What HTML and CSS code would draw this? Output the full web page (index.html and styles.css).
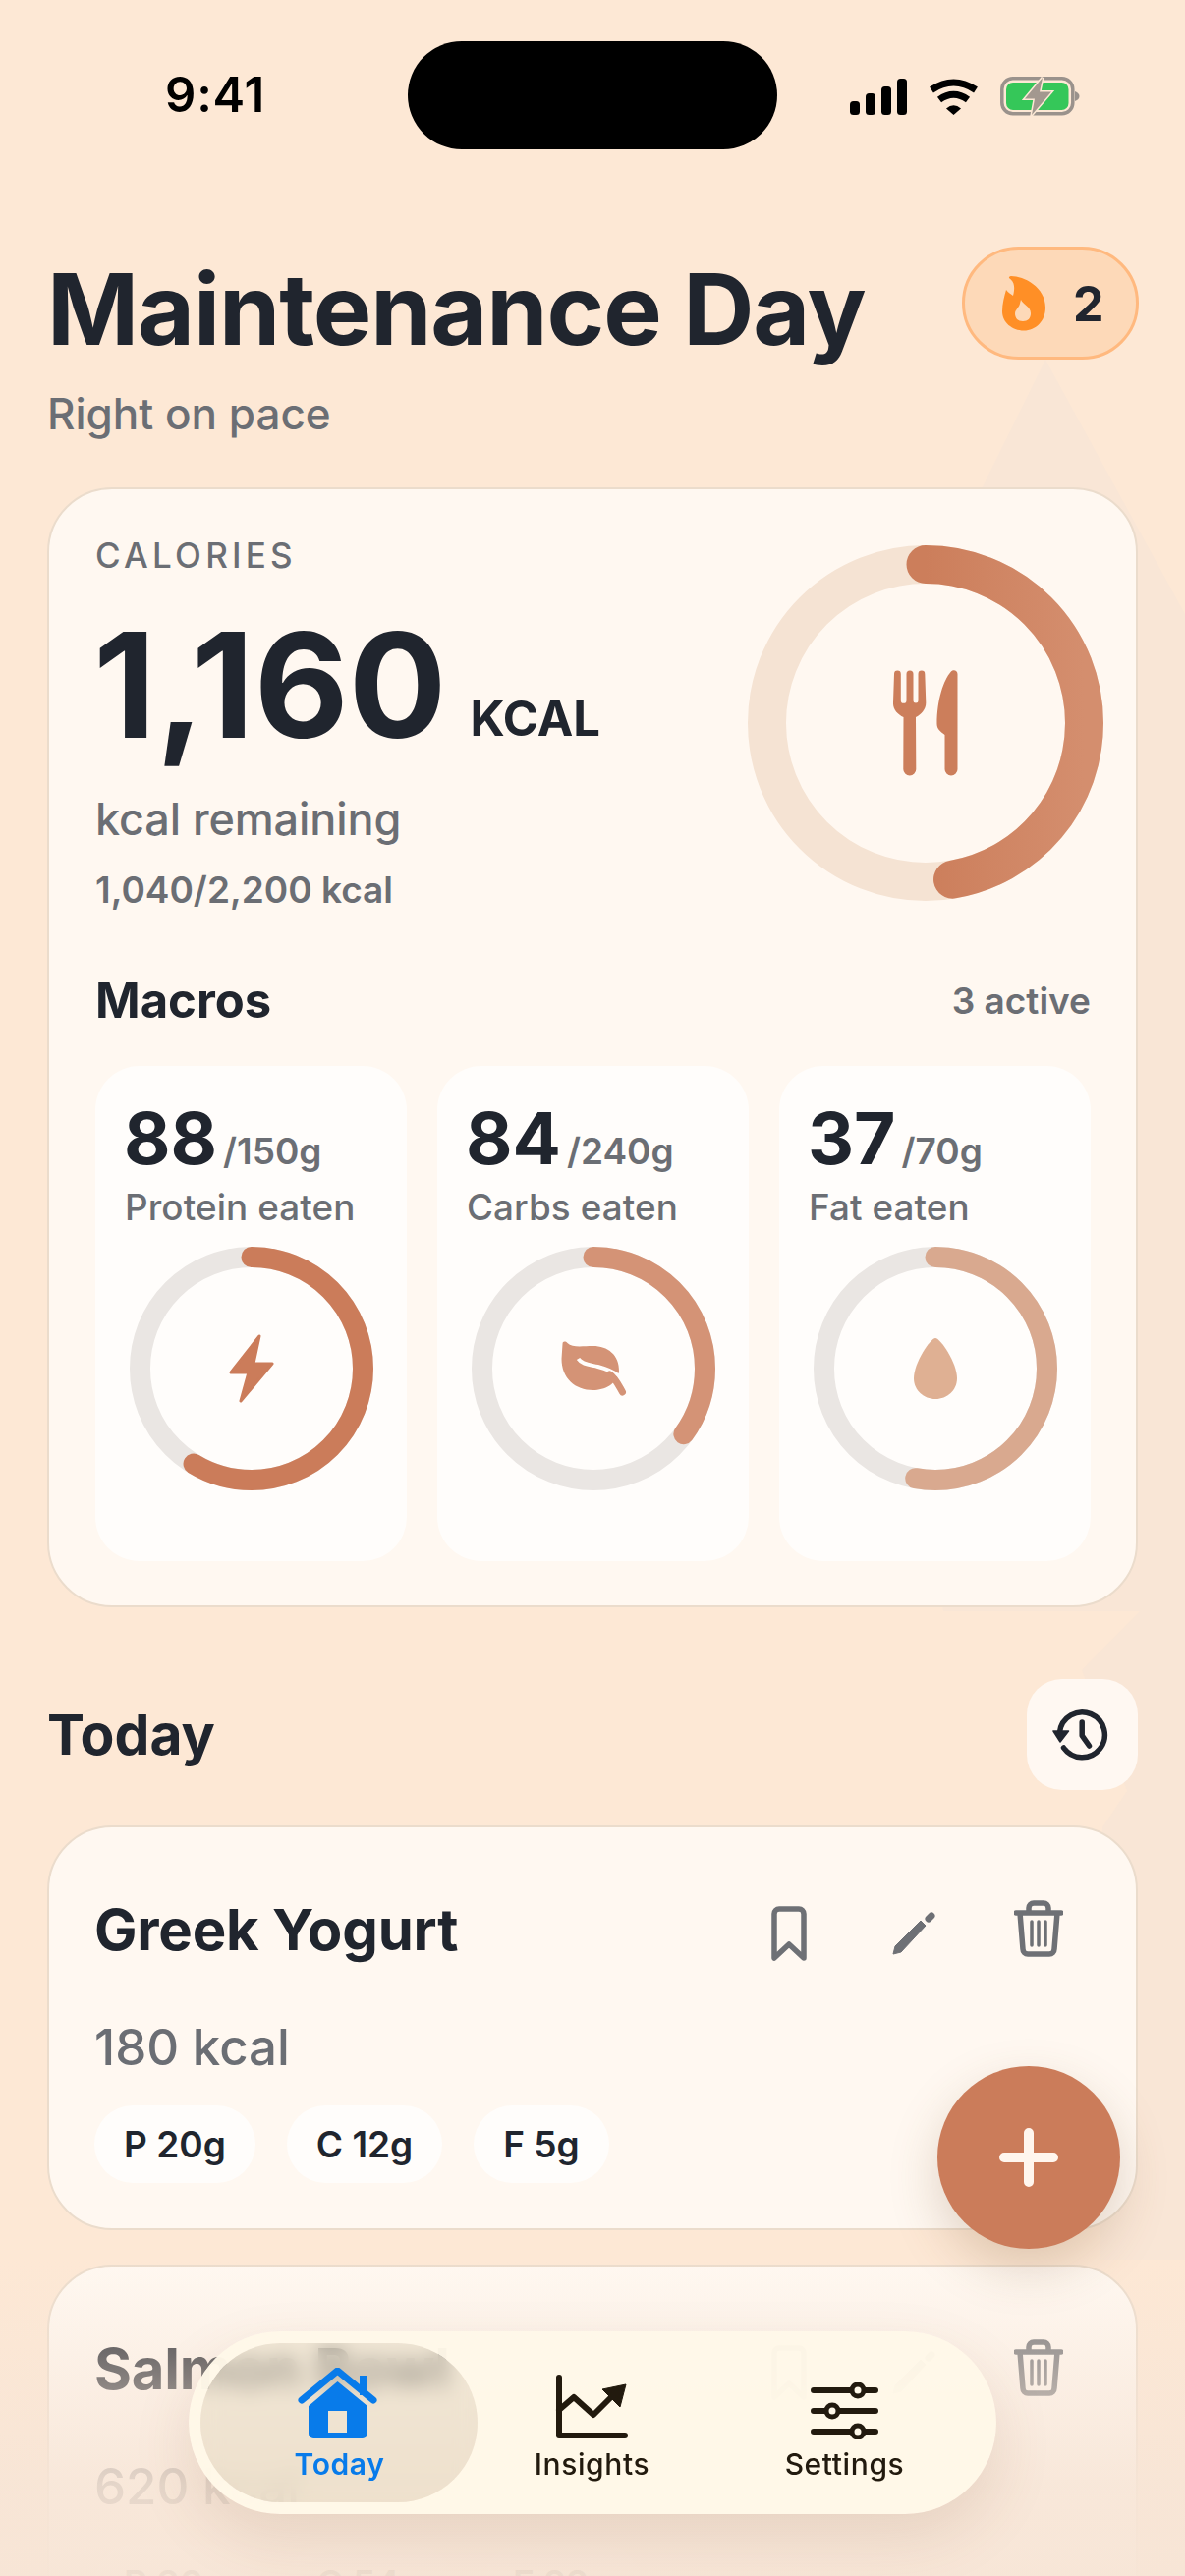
FILE: index.html
```html
<!DOCTYPE html>
<html lang="en">
<head>
<meta charset="utf-8">
<title>Maintenance Day</title>
<link rel="stylesheet" href="styles.css">
</head>
<body>
<div class="phone">
  <svg class="backdrop" viewBox="0 0 1206 2622" width="1206" height="2622" aria-hidden="true">
    <polygon class="backdrop-shape" points="1064,366 1206,625 1206,1650 1160,1640 960,1640 800,900"/>
    <polygon class="backdrop-shape" points="1160,1640 1206,1600 1206,2300 1120,2300 1122,1860 1147,1823 1101,1700"/>
  </svg>

  <header class="status">
    <div class="time">9:41</div>
    <div class="island"></div>
    <div class="status-icons">
      <svg class="i-signal" viewBox="0 0 58 37" width="58" height="37"><rect x="0" y="23" width="10" height="14" rx="3.5"/><rect x="16" y="15" width="10" height="22" rx="3.5"/><rect x="32" y="8" width="10" height="29" rx="3.5"/><rect x="48" y="0" width="10" height="37" rx="3.5"/></svg>
      <svg class="i-wifi" viewBox="0 0 51 37" width="51" height="37"><path class="wifi-arc" d="M3 11.5Q25.500-3.500 48 11.500"/><path class="wifi-arc" d="M11 21.500Q25.500 11 40 21.500"/><path d="M18 30.500Q25.500 24 33 30.500L25.500 37Z"/></svg>
      <svg class="i-battery" viewBox="0 0 82 40" width="82" height="40"><rect class="batt-shell" x="1.800" y="1.800" width="72" height="36" rx="11"/><rect class="batt-fill" x="6" y="6" width="63.500" height="28" rx="7"/><path class="batt-tip" d="M76 15c3 1 4.500 3 4.500 5s-1.500 4-4.500 5z"/><path class="batt-bolt" d="M43 1 25 22.500H35L32 39 52 15.500H40Z"/></svg>
    </div>
  </header>

  <main class="content">
    <section class="page-head">
      <div>
        <h1 class="page-title">Maintenance Day</h1>
        <p class="page-sub">Right on pace</p>
      </div>
      <div class="streak">
        <svg viewBox="0 0 44 57" width="44" height="57"><path class="flame" fill-rule="evenodd" d="M9 1C22 1 44 12 44 33 44 47 34 56.500 22 56.500 10 56.500 0 48 0 37 0 29 2 22 4 15 6 18 9 19 11 21 13 14 13 7 7 3 6.500 2 7.500 1 9 1ZM19 25C21 30 29 32 29 39 29 44 26 47 21 47 16 47 13 44 13 39 13 36 15 35 16 33 18 31 18 28 19 25Z"/></svg>
        <span class="streak-num">2</span>
      </div>
    </section>

    <section class="card summary">
      <div class="cal-row">
        <div class="cal-text">
          <div class="cal-label">CALORIES</div>
          <div class="cal-value"><span class="cal-num">1,160</span><span class="cal-unit">KCAL</span></div>
          <div class="cal-remaining">kcal remaining</div>
          <div class="cal-total">1,040/2,200 kcal</div>
        </div>
        <div class="cal-ring">
          <svg viewBox="0 0 362 362" width="362" height="362">
            <defs><linearGradient id="calGrad" x1="0" y1="0" x2="0" y2="1"><stop offset=".5" stop-color="#cc7e5b"/><stop offset="1" stop-color="#d48e6e"/></linearGradient></defs>
            <circle class="ring-track-cal" cx="181" cy="181" r="161.500"/>
            <circle class="ring-cal" cx="181" cy="181" r="161.500" pathLength="100" stroke-dasharray="47.270 100" transform="rotate(-90 181 181)"/>
          </svg>
          <svg class="ring-icon" viewBox="0 0 67 108" width="67" height="108"><path class="fill-clay" d="M1.500 4a3.400 3.400 0 0 1 6.800 0V31a2.850 2.850 0 0 0 5.700 0V4a3.500 3.500 0 0 1 7 0V31a2.500 2.500 0 0 0 5 0V4a3.400 3.400 0 0 1 6.800 0L33.800 33C34 40 29 45 23.500 48L23.800 101a6.500 6.500 0 0 1-13 0L11 48C5 45 0 40 .5 33Z"/><path class="fill-clay" d="M66 4V101a6.500 6.500 0 0 1-13 0V66C49 63 45 60 45 55 45 30 52 10 59 2 61-1 66 0 66 4Z"/></svg>
        </div>
      </div>

      <div class="macros-head">
        <h2 class="macros-title">Macros</h2>
        <span class="macros-count">3 active</span>
      </div>

      <div class="macro-grid">
        <article class="macro">
          <div class="macro-value"><span class="macro-num">88</span><span class="macro-goal">/150g</span></div>
          <div class="macro-label">Protein eaten</div>
          <div class="macro-ring">
            <svg viewBox="0 0 248 248" width="248" height="248"><circle class="ring-track" cx="124" cy="124" r="113.500"/><circle class="ring-prog prog-p" cx="124" cy="124" r="113.500" pathLength="100" stroke-dasharray="58.700 100" transform="rotate(-90 124 124)"/></svg>
            <svg class="ring-icon" viewBox="0 0 46 70" width="46" height="70"><path class="bolt" d="M31 2 2 39H20L12 68 44 30H25Z"/></svg>
          </div>
        </article>
        <article class="macro">
          <div class="macro-value"><span class="macro-num">84</span><span class="macro-goal">/240g</span></div>
          <div class="macro-label">Carbs eaten</div>
          <div class="macro-ring">
            <svg viewBox="0 0 248 248" width="248" height="248"><circle class="ring-track" cx="124" cy="124" r="113.500"/><circle class="ring-prog prog-c" cx="124" cy="124" r="113.500" pathLength="100" stroke-dasharray="35 100" transform="rotate(-90 124 124)"/></svg>
            <svg class="ring-icon" viewBox="0 0 67 56" width="67" height="56"><path class="leaf" d="M2 3C2 0 5 0 7 2 12 7 22 5 33 5 48 5 60 14 59.500 31 57 44 45 50 33 50 15 50 1 38 1 18Z"/><path class="leaf-vein" d="M18 18C22 24 30 24 38 26 46 28 52 30 60 36"/><path class="leaf-stem" d="M50 34C56 38 59 45 63 52"/></svg>
          </div>
        </article>
        <article class="macro">
          <div class="macro-value"><span class="macro-num">37</span><span class="macro-goal">/70g</span></div>
          <div class="macro-label">Fat eaten</div>
          <div class="macro-ring">
            <svg viewBox="0 0 248 248" width="248" height="248"><circle class="ring-track" cx="124" cy="124" r="113.500"/><circle class="ring-prog prog-f" cx="124" cy="124" r="113.500" pathLength="100" stroke-dasharray="52.860 100" transform="rotate(-90 124 124)"/></svg>
            <svg class="ring-icon" viewBox="0 0 44 62" width="44" height="62"><path class="drop" d="M22 0C27 0 44 25 44 41 44 53 34 62 22 62 10 62 0 53 0 41 0 25 17 0 22 0Z"/></svg>
          </div>
        </article>
      </div>
    </section>

    <section class="today-head">
      <h2 class="today-title">Today</h2>
      <button class="history" type="button" aria-label="History">
        <svg viewBox="3.500 0 60 60" width="60" height="60"><path class="hist-line" d="M10 27A23 23 0 1 1 14 43"/><path class="hist-arrow" d="M3.500 26H19L10.500 37Z"/><path class="hist-hand" d="M32.700 17V30.700L40 41"/></svg>
      </button>
    </section>

    <article class="card food">
      <div class="food-top">
        <h3 class="food-name">Greek Yogurt</h3>
        <div class="food-actions">
          <span class="act act-low"><svg viewBox="0 0 36 56" width="36" height="56"><path class="act-line" d="M3 8A5 5 0 0 1 8 3H28A5 5 0 0 1 33 8V53L18 39 3 53Z"/></svg></span>
          <span class="act act-low"><svg viewBox="0 0 44 44" width="44" height="44"><path class="act-fill" d="M1 43 3 35 29 9 34 14 9 41Z"/><path class="act-cap" d="M37 7 40 4"/></svg></span>
          <span class="act"><svg viewBox="0 0 50 58" width="50" height="58"><path class="act-line" d="M2 13H48M15 13V8A5 5 0 0 1 20 3H30A5 5 0 0 1 35 8V13M6 13 9 50A5 5 0 0 0 14 55H36A5 5 0 0 0 41 50L44 13"/><path class="act-rib" d="M18 22V46M25 22V46M32 22V46"/></svg></span>
        </div>
      </div>
      <div class="food-kcal">180 kcal</div>
      <div class="chips"><span class="chip">P 20g</span><span class="chip">C 12g</span><span class="chip">F 5g</span></div>
    </article>

    <article class="card food">
      <div class="food-top">
        <h3 class="food-name">Salmon Bowl</h3>
        <div class="food-actions">
          <span class="act act-low"><svg viewBox="0 0 36 56" width="36" height="56"><path class="act-line" d="M3 8A5 5 0 0 1 8 3H28A5 5 0 0 1 33 8V53L18 39 3 53Z"/></svg></span>
          <span class="act act-low"><svg viewBox="0 0 44 44" width="44" height="44"><path class="act-fill" d="M1 43 3 35 29 9 34 14 9 41Z"/><path class="act-cap" d="M37 7 40 4"/></svg></span>
          <span class="act"><svg viewBox="0 0 50 58" width="50" height="58"><path class="act-line" d="M2 13H48M15 13V8A5 5 0 0 1 20 3H30A5 5 0 0 1 35 8V13M6 13 9 50A5 5 0 0 0 14 55H36A5 5 0 0 0 41 50L44 13"/><path class="act-rib" d="M18 22V46M25 22V46M32 22V46"/></svg></span>
        </div>
      </div>
      <div class="food-kcal">620 kcal</div>
      <div class="chips"><span class="chip">P 30g</span><span class="chip">C 54g</span><span class="chip">F 22g</span></div>
    </article>
  </main>

  <div class="fade"></div>

  <button class="fab" type="button" aria-label="Add">
    <svg viewBox="0 0 60 60" width="60" height="60"><path class="fab-plus" d="M30 5V55M5 30H55"/></svg>
  </button>

  <nav class="tabbar">
    <span class="tab-pill"></span>
    <a class="tab tab-active">
      <svg viewBox="0 0 82 73" width="82" height="73"><path class="home-body" fill-rule="evenodd" d="M40.500 14 71 39V67A5 5 0 0 1 66 72H16A5 5 0 0 1 11 67V39ZM31 44V66H50V44Z"/><path class="home-roof" d="M4 33 40.500 3 77 33"/><rect class="home-chim" x="63" y="8" width="8" height="20"/></svg>
      <span class="tab-label">Today</span>
    </a>
    <a class="tab">
      <svg viewBox="0 0 75 66" width="75" height="66"><path class="chart-axis" d="M4 3V62H71"/><path class="chart-line" d="M4 36 19 23 39 41 58 22"/><path class="chart-head" d="M72 10 48 15 66 33Z"/></svg>
      <span class="tab-label">Insights</span>
    </a>
    <a class="tab">
      <svg viewBox="0 0 69 58" width="69" height="58"><path class="slider-line" d="M3 8H66M3 29H66M3 50H66"/><circle class="slider-knob" cx="48" cy="8" r="6"/><circle class="slider-knob" cx="22" cy="29" r="6"/><circle class="slider-knob" cx="48" cy="50" r="6"/></svg>
      <span class="tab-label">Settings</span>
    </a>
  </nav>
</div>
</body>
</html>
```

FILE: styles.css
```css
* { box-sizing: border-box; }
html, body { margin: 0; padding: 0; }
body { font-family: Inter, "Noto Sans", sans-serif; color: #20252e; background: #fde8d5; }
h1, h2, h3, p { margin: 0; }

.phone { position: relative; width: 1206px; height: 2622px; overflow: hidden; background: #fde8d5; }
.backdrop { position: absolute; left: 0; top: 0; }
.backdrop-shape { fill: #f9e6d6; }

/* status bar */
.status { position: relative; display: grid; grid-template-columns: 415px 376px 1fr; height: 152px; }
.time { margin: 68px 0 0 168px; font-size: 49px; line-height: 58px; font-weight: 600; color: #000; letter-spacing: .8px; }
.island { margin-top: 42px; height: 110px; border-radius: 55px; background: #000; }
.status-icons { display: flex; align-items: center; gap: 22px; height: 40px; margin-top: 78px; padding-left: 74px; }
.i-signal, .i-wifi { fill: #000; }
.wifi-arc { fill: none; stroke: #000; stroke-width: 7; }
.batt-shell { fill: none; stroke: #9a928c; stroke-width: 3.5; }
.batt-fill { fill: #35c759; }
.batt-tip { fill: #9a928c; }
.batt-bolt { fill: #a3988f; stroke: #fde8d5; stroke-width: 3; paint-order: stroke; }

/* layout */
.content { position: relative; padding: 0 48px; }
.page-head { display: flex; justify-content: space-between; align-items: flex-start; margin-top: 99px; }
.page-title { padding-top: 4px; font-size: 100px; line-height: 120px; font-weight: 700; letter-spacing: -1.1px; }
.page-sub { margin-top: 19px; font-size: 44px; line-height: 54px; color: #6b6e74; font-weight: 500; }
.streak { display: flex; align-items: center; gap: 28px; width: 180px; height: 115px; margin-right: -1px; padding-left: 38px; border: 3px solid #ffb97f; border-radius: 58px; background: #fdd9b8; }
.flame { fill: #ff8f26; }
.streak-num { font-size: 50px; line-height: 60px; font-weight: 700; }

.card { border: 2px solid #ebdccc; background: #fff8f1; border-radius: 66px; }
.summary { margin-top: 48px; padding: 45px 46px 45px 47px; }

.cal-row { display: flex; justify-content: space-between; align-items: flex-start; }
.cal-label { font-size: 35px; line-height: 44px; font-weight: 500; letter-spacing: 4.200px; color: #6b6e74; }
.cal-value { margin-top: 31px; height: 160px; line-height: 160px; white-space: nowrap; }
.cal-num { margin-left: -2px; font-size: 148px; font-weight: 700; }
.cal-unit { margin-left: 24px; font-size: 49px; font-weight: 700; vertical-align: 2px; }
.cal-remaining { margin-top: 28px; font-size: 45px; line-height: 56px; font-weight: 500; letter-spacing: -.1px; color: #6b6e74; }
.cal-total { margin-top: 22px; font-size: 37px; line-height: 44px; font-weight: 600; color: #6b6e74; }

.cal-ring { position: relative; width: 362px; height: 362px; margin: 12px -13px 0 0; }
.cal-ring svg:first-child, .macro-ring svg:first-child { display: block; }
.ring-icon { position: absolute; left: 50%; top: 50%; transform: translate(-50%, -50%); }
.ring-track-cal { fill: none; stroke: #f5e3d3; stroke-width: 39; }
.ring-cal { fill: none; stroke: url(#calGrad); stroke-width: 39; stroke-linecap: round; }
.fill-clay { fill: #cc7e5b; }

.macros-head { display: flex; justify-content: space-between; align-items: center; margin-top: 59px; }
.macros-title { font-size: 49px; line-height: 64px; font-weight: 700; }
.macros-count { font-size: 37px; line-height: 44px; font-weight: 600; color: #6b6e74; }

.macro-grid { display: grid; grid-template-columns: repeat(3, 1fr); gap: 31px; margin-top: 34px; }
.macro { padding: 31px 0 72px; border-radius: 45px; background: #fffdfb; }
.macro-value { display: flex; align-items: baseline; gap: 6px; padding-left: 29px; }
.macro-num { font-size: 73px; line-height: 86px; font-weight: 700; }
.macro-goal { font-size: 37px; line-height: 44px; font-weight: 600; color: #6b6e74; }
.macro-label { margin-top: 5px; padding-left: 30px; font-size: 36.800px; line-height: 44px; font-weight: 500; letter-spacing: .1px; color: #6b6e74; }
.macro-ring { position: relative; width: 248px; height: 248px; margin: 18px auto 0; }
.ring-track { fill: none; stroke: #eae6e3; stroke-width: 21; }
.ring-prog { fill: none; stroke-width: 21; stroke-linecap: round; }
.prog-p { stroke: #cb7c5a; }
.prog-c { stroke: #d49376; }
.prog-f { stroke: #d9a98f; }
.bolt { fill: #cb7c5a; stroke: #cb7c5a; stroke-width: 3; stroke-linejoin: round; }
.leaf { fill: #d49376; }
.leaf-vein { fill: none; stroke: #fffdfb; stroke-width: 4; }
.leaf-stem { fill: none; stroke: #d49376; stroke-width: 7; stroke-linecap: round; }
.drop { fill: #dfb093; }

.today-head { display: flex; justify-content: space-between; align-items: center; margin-top: 73px; }
.today-title { font-size: 57px; line-height: 72px; font-weight: 700; }
.history { display: flex; align-items: center; justify-content: center; width: 113px; height: 113px; padding: 0; border: 0; border-radius: 36px; background: #fff8f2; }
.history svg { overflow: visible; }
.hist-line, .hist-hand { fill: none; stroke: #20252e; stroke-width: 5.500; stroke-linecap: round; stroke-linejoin: round; }
.hist-arrow { fill: #20252e; stroke: #20252e; stroke-width: 1.500; stroke-linejoin: round; }

.food { margin-top: 35px; padding: 70px 47px 46px 46px; height: 412px; }
.today-head + .food { margin-top: 36px; }
.food-top { display: flex; justify-content: space-between; align-items: center; height: 68px; }
.food-name { font-size: 58px; line-height: 68px; font-weight: 700; letter-spacing: -.2px; }
.food-actions { display: flex; gap: 67px; margin-right: 22px; }
.act { display: flex; align-items: center; justify-content: center; width: 60px; height: 68px; margin-top: -4px; padding-top: 5px; }
.act-low { margin-top: 0; padding-top: 7px; }
.act-line { fill: none; stroke: #6e7075; stroke-width: 5.500; stroke-linejoin: round; stroke-linecap: round; }
.act-fill { fill: #6e7075; stroke: #6e7075; stroke-width: 1; stroke-linejoin: round; }
.act-cap { fill: none; stroke: #6e7075; stroke-width: 7; stroke-linecap: round; }
.act-rib { fill: none; stroke: #6e7075; stroke-width: 3.500; stroke-linecap: round; }
.food-kcal { margin-top: 55px; font-size: 51px; line-height: 62px; font-weight: 500; color: #6b6e74; }
.chips { display: flex; gap: 32px; margin-top: 28px; }
.chip { display: flex; align-items: center; height: 79px; padding: 0 30px; border-radius: 40px; background: #fffdfb; font-size: 37px; font-weight: 600; }

/* overlays */
.fade { position: absolute; left: 0; right: 0; top: 2300px; bottom: 0; background: linear-gradient(to bottom, rgba(247,229,214,0) 0, rgba(247,229,214,.5) 40%, rgba(247,229,214,.87) 71%, rgba(247,229,214,.96) 100%); }
.fab { position: absolute; left: 954px; top: 2103px; display: flex; align-items: center; justify-content: center; width: 186px; height: 186px; padding: 0; border: 0; border-radius: 50%; background: #cb7c5a; box-shadow: 0 20px 50px rgba(120,80,45,.22); }
.fab-plus { fill: none; stroke: #fff6ee; stroke-width: 10; stroke-linecap: round; }

.tabbar { position: absolute; left: 192px; top: 2373px; display: grid; grid-template-columns: repeat(3, 257px); width: 822px; height: 186px; padding: 0 25px; overflow: hidden; border-radius: 93px; box-shadow: 0 24px 60px rgba(120,80,45,.13); }
.tab-pill { position: absolute; left: 12px; top: 12px; width: 282px; height: 162px; border-radius: 81px; background: rgba(226,218,190,.45); box-shadow: 0 0 0 600px rgba(255,248,232,.97); backdrop-filter: blur(10px); }
.tab { position: relative; display: flex; flex-direction: column; align-items: center; justify-content: flex-end; padding-bottom: 33px; color: #221a0e; }
.tab svg { display: block; }
.tab-label { margin-top: 7px; font-size: 30px; line-height: 36px; font-weight: 500; letter-spacing: .6px; }
.tab-active { color: #087bea; }
.tab-active svg { margin-right: 4px; }
.tab-active .tab-label { font-weight: 600; }
.home-body, .home-chim { fill: #087bea; }
.home-roof { fill: none; stroke: #087bea; stroke-width: 7; stroke-linecap: round; stroke-linejoin: round; }
.chart-axis, .chart-line { fill: none; stroke: #221a0e; stroke-width: 6; stroke-linecap: round; stroke-linejoin: round; }
.chart-head { fill: #221a0e; stroke: #221a0e; stroke-width: 1; stroke-linejoin: round; }
.slider-line { fill: none; stroke: #221a0e; stroke-width: 6; stroke-linecap: round; }
.slider-knob { fill: #fff8e8; stroke: #221a0e; stroke-width: 5; }
```
